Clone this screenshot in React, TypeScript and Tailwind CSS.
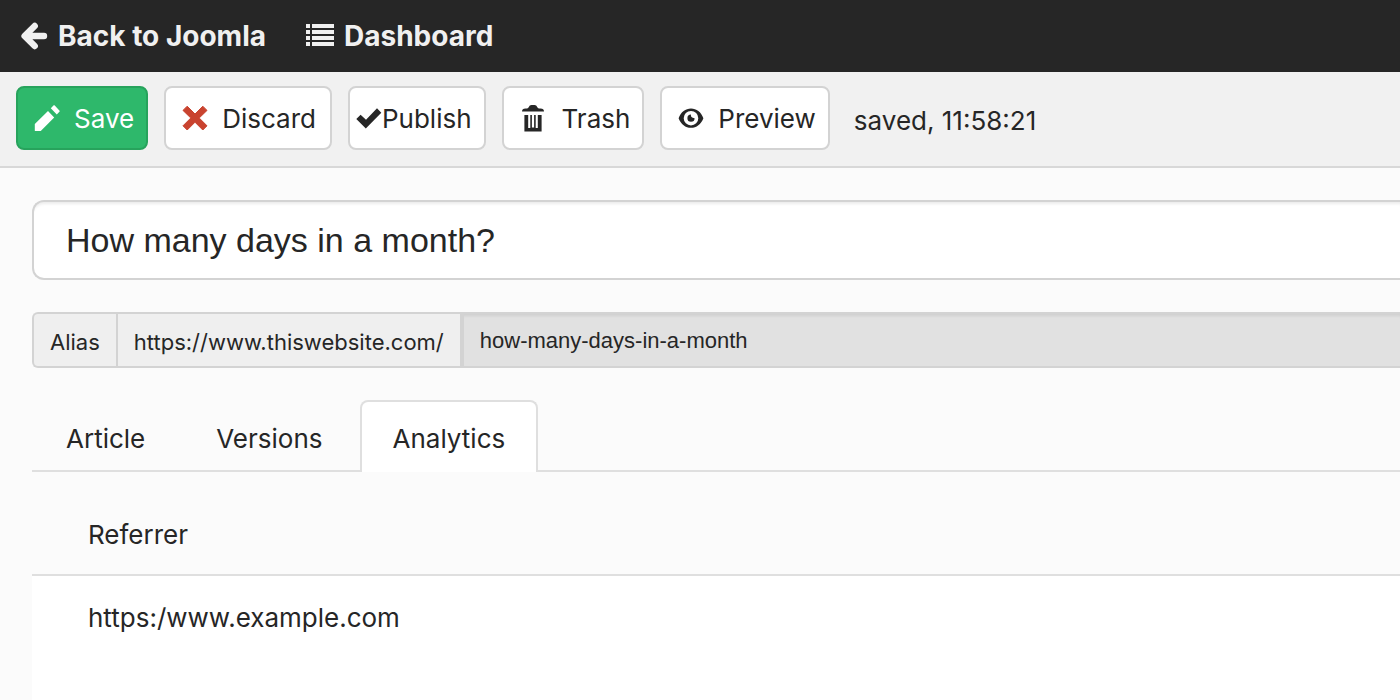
import type { ReactNode } from "react";

const TABS = ["Article", "Versions", "Analytics"];
const REFERRERS = ["https:/www.example.com"];

function ArrowLeftIcon() {
  return (
    <svg viewBox="0 0 28 28" className="h-7 w-7" fill="none" stroke="currentColor" strokeWidth="6.4" strokeLinecap="round" strokeLinejoin="round" aria-hidden="true">
      <path d="M14.7 4 4.6 14l10.1 10M6 14h18" />
    </svg>
  );
}

function ListIcon() {
  return (
    <svg viewBox="0 0 28 28" className="h-7 w-7" fill="currentColor" aria-hidden="true">
      <path d="M0 2h4v4H0zM6 2h22v4H6zM0 8h4v4H0zM6 8h22v4H6zM0 14h4v4H0zM6 14h22v4H6zM0 20h4v4H0zM6 20h22v4H6z" />
    </svg>
  );
}

function PencilIcon() {
  return (
    <svg viewBox="0 0 26 26" className="h-[26px] w-[26px]" fill="currentColor" aria-hidden="true">
      <path d="M.8 25.500V19L14 6l6.2 6.500L7 25.800q-.2.200-.5.200H1.300q-.5 0-.5-.5zM16.800 3.200 19.700.3q.4-.3.800 0l5.100 5.400q.3.400 0 .8L22.800 9.400z" />
    </svg>
  );
}

function CrossIcon() {
  return (
    <svg viewBox="0 0 26 26" className="h-[26px] w-[26px] text-[#c9432f]" fill="currentColor" stroke="currentColor" strokeWidth="1" strokeLinejoin="round" aria-hidden="true">
      <path d="m5.200 1.200 7.800 7.800 7.800-7.800 4.200 4.200-7.800 7.600 7.800 7.800-4.200 4.200-7.800-7.800L5.200 25 1 20.800 8.800 13 1 5.400z" />
    </svg>
  );
}

function CheckIcon() {
  return (
    <svg viewBox="0 0 26 26" className="h-[26px] w-[26px]" fill="currentColor" aria-hidden="true">
      <path d="m.3 14 4.300-4.300 5.400 5L21 3.200l4.300 4.600L9.800 23.500z" />
    </svg>
  );
}

function TrashIcon() {
  return (
    <svg viewBox="0 0 28 28" className="h-7 w-7" fill="currentColor" aria-hidden="true">
      <path d="M2 7.400q0-2.900 3.500-2.900H7q1.300 0 1.800-1.400Q9.500 1 11.500 1h3q2 0 2.700 2.100.5 1.400 1.800 1.400h1.500q3.500 0 3.500 2.900z" />
      <path d="M4.400 11h3.800v13h2.100V11h1.600v12.600h2.200V11h1.600v13h2.100V11h3.800v16.400H4.400z" />
    </svg>
  );
}

function EyeIcon() {
  return (
    <svg viewBox="0 0 26 26" className="h-[26px] w-[26px]" fill="currentColor" aria-hidden="true">
      <path fillRule="evenodd" d="M.6 13.200C3 7 7.500 3.600 13 3.600S23 7 25.400 13.200C23 19.400 18.500 22.800 13 22.800S3 19.400.6 13.200zM13 5.900a7.300 7.300 0 1 0 0 14.600 7.300 7.300 0 0 0 0-14.600z" />
      <path d="M13 9.600q-.8 3.400 3.600 3.600A3.600 3.600 0 1 1 13 9.600z" />
    </svg>
  );
}

function ToolbarButton({ icon, label, className }: { icon: ReactNode; label: string; className: string }) {
  return (
    <button type="button" className={`flex h-16 shrink-0 items-center rounded-lg border-2 ${className}`}>
      {icon}
      <span className="pt-0.5">{label}</span>
    </button>
  );
}

export default function App() {
  return (
    <div className="min-h-screen overflow-x-hidden bg-[#fbfbfb] font-[Inter,'Liberation_Sans',sans-serif] text-[26px] leading-9 text-[#262626]">
      <nav className="flex h-[72px] items-center gap-10 bg-[#262626] px-5 text-[28px] font-bold text-[#f0f0f0]">
        <a href="#joomla" className="flex items-center gap-[10px]">
          <ArrowLeftIcon />
          Back to Joomla
        </a>
        <a href="#dashboard" className="flex items-center gap-[10px]">
          <ListIcon />
          Dashboard
        </a>
      </nav>

      <header className="flex h-24 items-center gap-4 border-b-2 border-[#d8d8d8] bg-[#f1f1f1] px-4 pb-0.5">
        <ToolbarButton icon={<PencilIcon />} label="Save" className="gap-[14px] border-[#27a35c] bg-[#2eb86b] pl-4 pr-3 text-white" />
        <ToolbarButton icon={<CrossIcon />} label="Discard" className="gap-[14px] border-[#d3d3d3] bg-white pl-4 pr-[14px]" />
        <ToolbarButton icon={<CheckIcon />} label="Publish" className="border-[#d3d3d3] bg-white pl-1.5 pr-3" />
        <ToolbarButton icon={<TrashIcon />} label="Trash" className="gap-[14px] border-[#d3d3d3] bg-white pl-4 pr-3" />
        <ToolbarButton icon={<EyeIcon />} label="Preview" className="gap-[14px] border-[#d3d3d3] bg-white pl-4 pr-3" />
        <p className="ml-2 whitespace-nowrap pt-1.5">saved, 11:58:21</p>
      </header>

      <main className="pl-8 pt-8">
        <input
          type="text"
          aria-label="Title"
          defaultValue="How many days in a month?"
          className="block h-20 w-full rounded-l-xl border-2 border-r-0 border-[#d3d3d3] bg-white px-8 font-['Liberation_Sans',Arial,sans-serif] text-[34px] shadow-[inset_0_4px_3px_-2px_rgba(0,0,0,0.08)]"
        />

        <div className="mt-8 flex h-14 rounded-l-md border-2 border-r-0 border-[#d3d3d3] bg-[#efefef] text-[22px]">
          <label htmlFor="alias" className="flex items-center border-r-2 border-[#d3d3d3] px-4 pt-1">
            Alias
          </label>
          <span className="flex items-center px-4 pt-1">https://www.thiswebsite.com/</span>
          <input
            id="alias"
            type="text"
            readOnly
            defaultValue="how-many-days-in-a-month"
            className="min-w-0 flex-1 border-l-4 border-[#d3d3d3] bg-[#e1e1e1] px-4 pt-0.5 font-['Liberation_Sans',Arial,sans-serif] shadow-[inset_0_4px_3px_-2px_rgba(0,0,0,0.08)]"
          />
        </div>

        <div role="tablist" className="mt-8 flex h-[72px] border-b-2 border-[#dfdfdf]">
          {TABS.map((tab) => {
            const active = tab === "Analytics";

            return (
              <button
                key={tab}
                type="button"
                role="tab"
                aria-selected={active}
                className={[
                  "h-[72px] rounded-t-lg border-2 border-b-0 pb-0.5 pt-1.5",
                  active ? "border-[#dfdfdf] bg-white px-[31px]" : "mr-[3px] border-transparent px-8",
                ].join(" ")}
              >
                {tab}
              </button>
            );
          })}
        </div>

        <table className="mt-6 w-full border-separate border-spacing-0 text-left">
          <thead>
            <tr>
              <th className="h-20 border-b-2 border-[#dfdfdf] px-14 font-normal">Referrer</th>
            </tr>
          </thead>
          <tbody className="bg-white">
            {REFERRERS.map((url) => (
              <tr key={url} className="h-[124px] align-top">
                <td className="px-14 pt-6">{url}</td>
              </tr>
            ))}
          </tbody>
        </table>
      </main>
    </div>
  );
}
